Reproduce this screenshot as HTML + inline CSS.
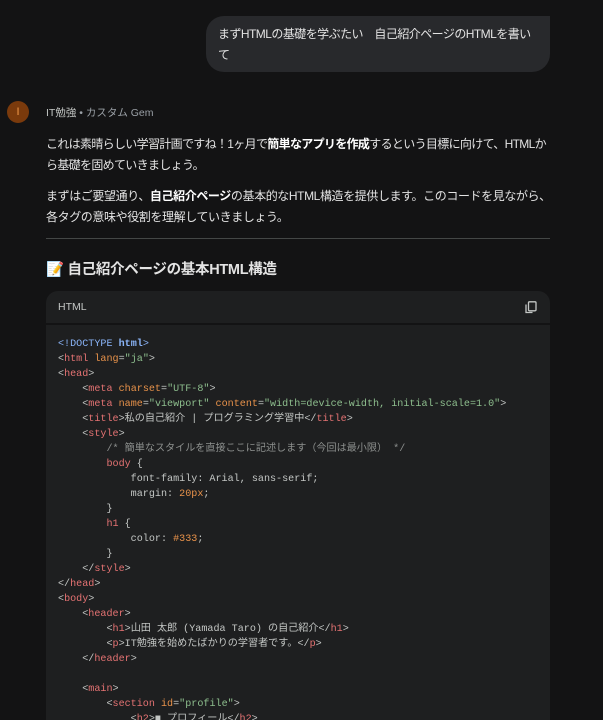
<!DOCTYPE html>
<html style="height:720px;overflow:hidden"><head><meta charset="utf-8"><style>
body{margin:0;width:603px;height:720px;overflow:hidden;background:#131314;font-family:"Liberation Sans","Noto Sans CJK JP",sans-serif;color:#e3e3e3;position:relative}
.bubble{position:absolute;left:206px;top:16px;width:344px;height:56px;background:#28292c;border-radius:18px 0 18px 18px;box-sizing:border-box;padding:8px 12px;font-size:12px;line-height:21px;color:#e3e3e3;letter-spacing:-0.55px;white-space:nowrap}
.av{position:absolute;left:7px;top:101px;width:22px;height:22px;border-radius:50%;background:#7a3a0c;color:#f29a4a;font-size:11px;text-align:center;line-height:22px}
.name{position:absolute;left:46px;top:105px;font-size:10.5px;color:#c4c7c5}
.name span{color:#9aa0a6}
p{position:absolute;left:46px;margin:0;font-size:12px;line-height:21px;color:#e3e3e3;letter-spacing:-0.4px;white-space:nowrap}
b{color:#fff}
.hr{position:absolute;left:46px;top:238px;width:504px;height:1px;background:#444746}
h2{position:absolute;left:46px;top:258px;margin:0;font-size:14.5px;font-weight:bold;color:#e3e3e3;letter-spacing:-0.3px}
.cb{position:absolute;left:46px;top:291px;width:504px;height:460px;background:#1e1f20;border-radius:12px}
.ch{height:32px;border-bottom:2px solid #131314;font-size:10.5px;line-height:32px;padding-left:12px;color:#c4c7c5;position:relative}
pre{position:absolute;left:58px;top:337px;margin:0;font-family:"Liberation Mono","Noto Sans CJK JP",monospace;font-size:10.1px;line-height:15px;color:#c4c7c5}
.t{color:#e57373}.a{color:#e8924a}.s{color:#8ebf8e}.d{color:#8ab4f8}.c{color:#8e918f}.n{color:#e8924a}
</style></head><body>
<div class="bubble">まずHTMLの基礎を学ぶたい　自己紹介ページのHTMLを書い<br>て</div>
<div class="av">I</div>
<div class="name">IT勉強 <span>• カスタム Gem</span></div>
<p style="top:134px;letter-spacing:-0.67px">これは素晴らしい学習計画ですね！1ヶ月で<b>簡単なアプリを作成</b>するという目標に向けて、HTMLか<br>ら基礎を固めていきましょう。</p>
<p style="top:186px">まずはご要望通り、<b>自己紹介ページ</b>の基本的なHTML構造を提供します。このコードを見ながら、<br>各タグの意味や役割を理解していきましょう。</p>
<div class="hr"></div>
<h2>📝 自己紹介ページの基本HTML構造</h2>
<div class="cb"><div class="ch">HTML<svg style="position:absolute;right:13px;top:10px" width="12" height="13" viewBox="0 0 12 13" fill="none" stroke="#c4c7c5" stroke-width="1.3"><rect x="3.5" y="0.8" width="7.5" height="9" rx="1"/><path d="M1 3.5v8h6.5"/></svg></div></div>
<pre><span class="d">&lt;!DOCTYPE <b style="color:#8ab4f8">html</b>&gt;</span>
&lt;<span class="t">html</span> <span class="a">lang</span>=<span class="s">"ja"</span>&gt;
&lt;<span class="t">head</span>&gt;
    &lt;<span class="t">meta</span> <span class="a">charset</span>=<span class="s">"UTF-8"</span>&gt;
    &lt;<span class="t">meta</span> <span class="a">name</span>=<span class="s">"viewport"</span> <span class="a">content</span>=<span class="s">"width=device-width, initial-scale=1.0"</span>&gt;
    &lt;<span class="t">title</span>&gt;私の自己紹介 | プログラミング学習中&lt;/<span class="t">title</span>&gt;
    &lt;<span class="t">style</span>&gt;
        <span class="c">/* 簡単なスタイルを直接ここに記述します（今回は最小限） */</span>
        <span class="t">body</span> {
            font-family: Arial, sans-serif;
            margin: <span class="n">20px</span>;
        }
        <span class="t">h1</span> {
            color: <span class="n">#333</span>;
        }
    &lt;/<span class="t">style</span>&gt;
&lt;/<span class="t">head</span>&gt;
&lt;<span class="t">body</span>&gt;
    &lt;<span class="t">header</span>&gt;
        &lt;<span class="t">h1</span>&gt;山田 太郎 (Yamada Taro) の自己紹介&lt;/<span class="t">h1</span>&gt;
        &lt;<span class="t">p</span>&gt;IT勉強を始めたばかりの学習者です。&lt;/<span class="t">p</span>&gt;
    &lt;/<span class="t">header</span>&gt;

    &lt;<span class="t">main</span>&gt;
        &lt;<span class="t">section</span> <span class="a">id</span>=<span class="s">"profile"</span>&gt;
            &lt;<span class="t">h2</span>&gt;■ プロフィール&lt;/<span class="t">h2</span>&gt;</pre>
</body></html>
